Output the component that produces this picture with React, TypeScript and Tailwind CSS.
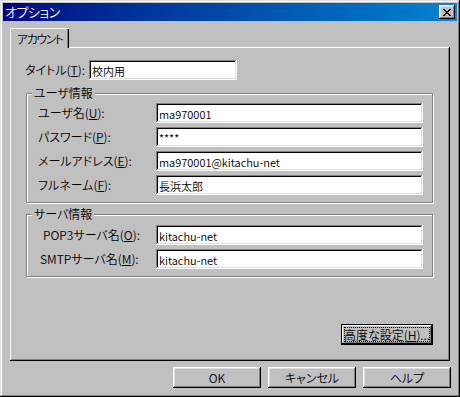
const raised =
  "shadow-[inset_-1px_-1px_#000,inset_1px_1px_#fff,inset_-2px_-2px_#808080,inset_2px_2px_#dfdfdf]";
const sunken =
  "shadow-[inset_-1px_-1px_#fff,inset_1px_1px_#808080,inset_-2px_-2px_#dfdfdf,inset_2px_2px_#000]";

function Field({ value, width }: { value: string; width: string }) {
  return (
    <div className={`h-[20px] ${width} bg-white ${sunken} flex items-center pl-[3px] pt-px text-[11px] text-black whitespace-nowrap overflow-hidden`}>
      {value}
    </div>
  );
}

function Label({ text, k, pad }: { text: string; k: string; pad: string }) {
  return (
    <div className={`w-[129px] ${pad} whitespace-nowrap`}>
      {text}(<u>{k}</u>):
    </div>
  );
}

function Group({ title, height, children }: { title: string; height: string; children: React.ReactNode }) {
  return (
    <div className={`relative ml-[16px] w-[407px] ${height} border border-[#808080] shadow-[inset_1px_1px_#fff,1px_1px_#fff]`}>
      <span className="absolute left-[5px] -top-[8px] bg-[#c0c0c0] px-[2px] leading-[14px]">{title}</span>
      {children}
    </div>
  );
}

function Button({ children, className = "" }: { children: React.ReactNode; className?: string }) {
  return (
    <div className={`h-[21px] w-[88px] ${raised} flex items-center justify-center ${className}`}>
      {children}
    </div>
  );
}

export default function App() {
  return (
    <div className="w-[460px] h-[397px] bg-[#c0c0c0] p-[3px] text-[12px] leading-[14px] font-[350] text-black font-['Noto_Sans_CJK_JP',sans-serif] [font-feature-settings:'palt'] shadow-[inset_-1px_-1px_#000,inset_1px_1px_#dfdfdf,inset_-2px_-2px_#808080,inset_2px_2px_#fff]">
      {/* title bar */}
      <div className="h-[18px] flex items-center justify-between bg-gradient-to-r from-[#000080] to-[#1084d0] pl-[2px] pr-[2px]">
        <span className="text-white text-[13px] tracking-[-0.5px]">オプション</span>
        <div className={`w-[16px] h-[14px] bg-[#c0c0c0] ${raised} flex items-center justify-center`}>
          <svg width="8" height="7" viewBox="0 0 8 7" shapeRendering="crispEdges">
            <path d="M0 0h2v1h-2zM6 0h2v1h-2zM1 1h2v1h-2zM5 1h2v1h-2zM2 2h4v1h-4zM3 3h2v1h-2zM2 4h4v1h-4zM1 5h2v1h-2zM5 5h2v1h-2zM0 6h2v1h-2zM6 6h2v1h-2z" fill="#000" />
          </svg>
        </div>
      </div>

      <div className="pl-[7px] pt-[7px]">
        {/* tab */}
        <div className="flex">
          <div className="relative z-10 -mb-px h-[20px] w-[59px] bg-[#c0c0c0] rounded-tl-[2px] border-l border-t border-white shadow-[inset_-1px_0_#000,inset_-2px_0_#808080] flex items-center pl-[6px] pt-px whitespace-nowrap tracking-[-1.5px]">
            アカウント
          </div>
        </div>

        {/* panel */}
        <div className="w-[440px] h-[314px] shadow-[inset_-1px_-1px_#000,inset_1px_1px_#fff,inset_-2px_-2px_#808080] flex flex-col">
          <div className="mt-[13px] flex items-center">
            <div className="ml-[15px] w-[64px] whitespace-nowrap">
              タイトル(<u>T</u>):
            </div>
            <Field value="校内用" width="w-[148px]" />
          </div>

          <div className="mt-[13px]">
            <Group title="ユーザ情報" height="h-[110px]">
              <div className="flex flex-col gap-[4px] pt-[9px]">
                <div className="flex items-center">
                  <Label text="ユーザ名" k="U" pad="pl-[11px]" />
                  <Field value="ma970001" width="w-[267px]" />
                </div>
                <div className="flex items-center">
                  <Label text="パスワード" k="P" pad="pl-[11px]" />
                  <Field value="****" width="w-[267px]" />
                </div>
                <div className="flex items-center">
                  <Label text="メールアドレス" k="E" pad="pl-[11px]" />
                  <Field value="ma970001@kitachu-net" width="w-[267px]" />
                </div>
                <div className="flex items-center">
                  <Label text="フルネーム" k="F" pad="pl-[11px]" />
                  <Field value="長浜太郎" width="w-[267px]" />
                </div>
              </div>
            </Group>
          </div>

          <div className="mt-[11px]">
            <Group title="サーバ情報" height="h-[63px]">
              <div className="flex flex-col gap-[4px] pt-[10px]">
                <div className="flex items-center">
                  <Label text="POP3サーバ名" k="O" pad="pl-[16px]" />
                  <Field value="kitachu-net" width="w-[267px]" />
                </div>
                <div className="flex items-center">
                  <Label text="SMTPサーバ名" k="M" pad="pl-[13px]" />
                  <Field value="kitachu-net" width="w-[267px]" />
                </div>
              </div>
            </Group>
          </div>

          <div className="mt-[47px] ml-[331px] w-[92px] h-[21px] border border-black">
            <div className="w-full h-full shadow-[inset_-1px_-1px_#000,inset_1px_1px_#fff,inset_-2px_-2px_#808080] flex items-center justify-center p-[3px]">
              <span className="w-full h-full outline outline-1 outline-dotted outline-black flex items-center justify-center whitespace-nowrap">
                高度な設定(<u>H</u>)...
              </span>
            </div>
          </div>
        </div>

        {/* buttons */}
        <div className="mt-[6px] ml-[163px] flex gap-[7px]">
          <Button>OK</Button>
          <Button>キャンセル</Button>
          <Button>ヘルプ</Button>
        </div>
      </div>
    </div>
  );
}
